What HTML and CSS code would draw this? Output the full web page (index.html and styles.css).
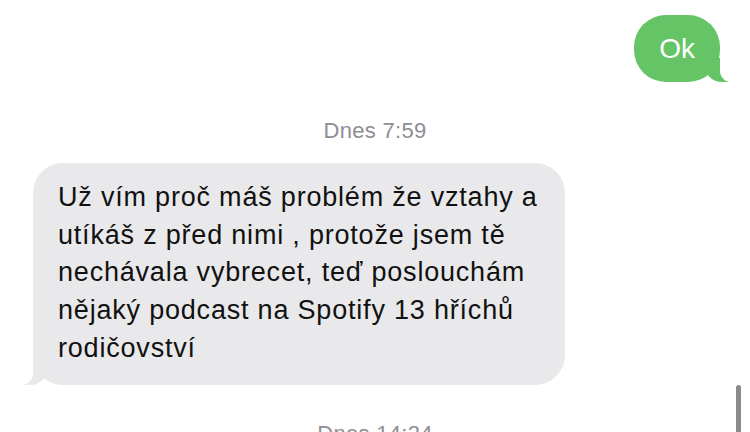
FILE: index.html
```html
<!DOCTYPE html>
<html>
<head>
  <title>Zprávy</title>
  <link rel="stylesheet" href="styles.css">
</head>
<body>
  <div class="thread">
    <div class="row row-out">
      <div class="bubble out">Ok</div>
    </div>

    <div class="stamp"><b>Dnes</b> 7:59</div>

    <div class="row row-in">
      <div class="bubble in">Už vím proč máš problém že vztahy a<br>utíkáš z před nimi , protože jsem tě<br>nechávala vybrecet, teď poslouchám<br>nějaký podcast na Spotify 13 hříchů<br>rodičovství</div>
    </div>

    <div class="stamp"><b>Dnes</b> 14:24</div>
  </div>

  <div class="scrollbar"></div>
</body>
</html>
```

FILE: styles.css
```css
body {
  margin: 0;
  background: #fff;
  font-family: "Liberation Sans", Arial, sans-serif;
  overflow: hidden;
  height: 432px;
}

.thread {
  display: flex;
  flex-direction: column;
  padding-top: 15px;
}

.row {
  display: flex;
}

.row-out {
  justify-content: flex-end;
  padding-right: 30px;
}

.row-in {
  justify-content: flex-start;
  padding-left: 33px;
}

.bubble {
  position: relative;
}

.out {
  background: #65c466;
  color: #fff;
  font-size: 28px;
  height: 67px;
  line-height: 67px;
  padding: 0 25px;
  border-radius: 32px;
}

.out:before {
  content: "";
  position: absolute;
  bottom: 0;
  right: -8px;
  width: 24px;
  height: 24px;
  background: #65c466;
  border-bottom-left-radius: 18px;
}

.out:after {
  content: "";
  position: absolute;
  bottom: 0;
  right: -14px;
  width: 14px;
  height: 24px;
  background: #fff;
  border-bottom-left-radius: 11px;
}

.in {
  background: #e9e9eb;
  color: #111;
  font-size: 27px;
  letter-spacing: 0.8px;
  line-height: 37.7px;
  width: 482px;
  white-space: nowrap;
  padding: 16px 25px 17px;
  border-radius: 30px;
}

.in:before {
  content: "";
  position: absolute;
  bottom: 0;
  left: -11px;
  width: 26px;
  height: 24px;
  background: #e9e9eb;
  border-bottom-right-radius: 18px;
}

.in:after {
  content: "";
  position: absolute;
  bottom: 0;
  left: -17px;
  width: 17px;
  height: 24px;
  background: #fff;
  border-bottom-right-radius: 12px;
}

.stamp {
  text-align: center;
  color: #8e8e93;
  font-size: 22px;
  letter-spacing: 0.3px;
  line-height: 24px;
  margin: 37px 0 20px;
}

.stamp b {
  font-weight: normal;
}

.scrollbar {
  position: absolute;
  right: 9px;
  top: 385px;
  width: 5px;
  height: 60px;
  border-radius: 3px;
  background: #8a8a8a;
}
```
